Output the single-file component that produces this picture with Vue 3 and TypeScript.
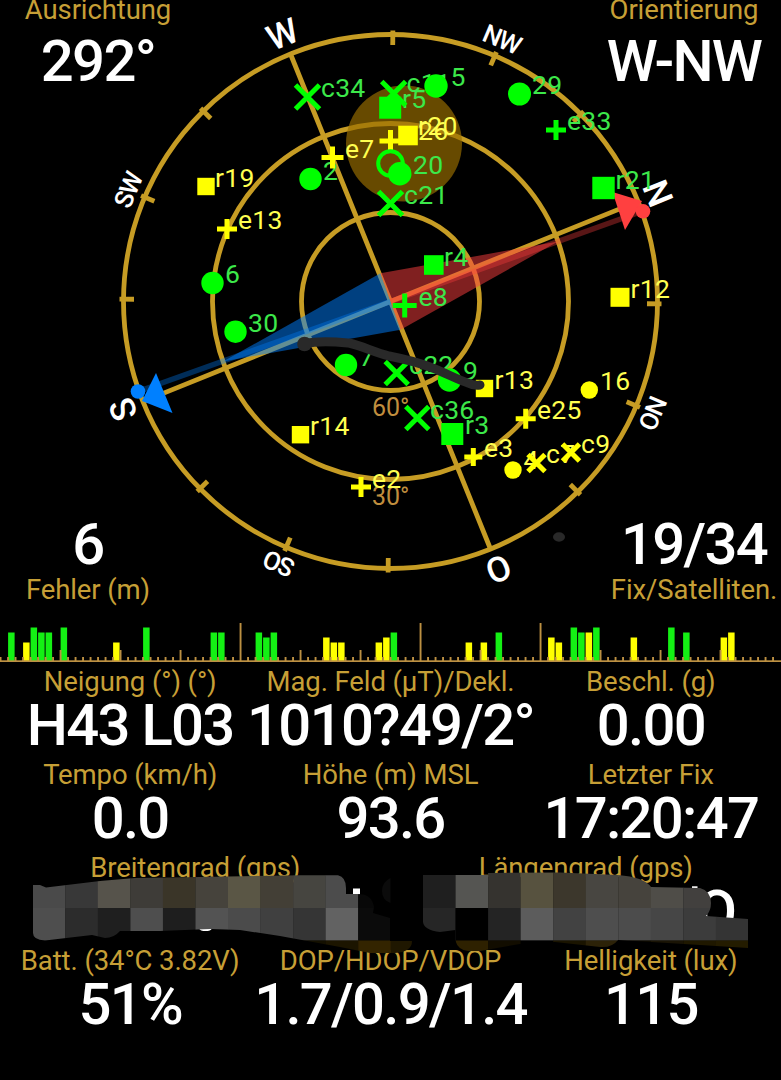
<script setup lang="ts">
type Shape = 'dot' | 'ring' | 'square' | 'plus' | 'cross'
interface Sat {
  shape: Shape
  x: number
  y: number
  r: number
  c: 'g' | 'y'
  label?: string
  lx?: number
  ly?: number
}

const CX = 390.5
const CY = 301.5
const HEADING = 68

const points = [
  { t: 'N', a: HEADING, big: true },
  { t: 'NO', a: HEADING + 45, big: false },
  { t: 'O', a: HEADING + 90, big: true },
  { t: 'SO', a: HEADING + 135, big: false },
  { t: 'S', a: HEADING + 180, big: true },
  { t: 'SW', a: HEADING + 225, big: false },
  { t: 'W', a: HEADING + 270, big: true },
  { t: 'NW', a: HEADING + 315, big: false },
]
const ticks = Array.from({ length: 16 }, (_, i) => i)
  .filter((i) => i % 4 !== 0)
  .map((i) => HEADING + i * 22.5)

const sats: Sat[] = [
  { shape: 'cross', x: 307.5, y: 97, r: 12, c: 'g', label: 'c34', lx: 321, ly: 97 },
  { shape: 'cross', x: 393.7, y: 93.5, r: 12, c: 'g', label: 'c11', lx: 406.5, ly: 91.5 },
  { shape: 'dot', x: 436, y: 86, r: 11.7, c: 'g', label: '5', lx: 450.5, ly: 86 },
  { shape: 'square', x: 390.2, y: 107.7, r: 11, c: 'g', label: 'r5', lx: 402, ly: 107.5 },
  { shape: 'dot', x: 519.5, y: 94, r: 11.5, c: 'g', label: '29', lx: 532, ly: 94 },
  { shape: 'plus', x: 556, y: 130, r: 10, c: 'g', label: 'e33', lx: 567, ly: 130 },
  { shape: 'square', x: 603.5, y: 188, r: 11.2, c: 'g', label: 'r21', lx: 615.5, ly: 188.5 },
  { shape: 'plus', x: 390.5, y: 141, r: 11, c: 'y', label: '26', lx: 418, ly: 139.5 },
  { shape: 'square', x: 408, y: 135.5, r: 9.8, c: 'y', label: 'r20', lx: 418, ly: 134.5 },
  { shape: 'dot', x: 310.5, y: 179, r: 11.2, c: 'g', label: '2', lx: 323, ly: 179.5 },
  { shape: 'plus', x: 332.5, y: 157.5, r: 11, c: 'y', label: 'e7', lx: 345, ly: 158 },
  { shape: 'ring', x: 390.5, y: 163.5, r: 12.3, c: 'g' },
  { shape: 'dot', x: 399.8, y: 173.7, r: 11.7, c: 'g', label: '20', lx: 413, ly: 173.5 },
  { shape: 'cross', x: 390.5, y: 203.5, r: 12, c: 'g', label: 'c21', lx: 404, ly: 203.5 },
  { shape: 'square', x: 206, y: 186.5, r: 8.7, c: 'y', label: 'r19', lx: 215, ly: 187 },
  { shape: 'plus', x: 227, y: 229, r: 10, c: 'y', label: 'e13', lx: 238, ly: 229 },
  { shape: 'dot', x: 212.5, y: 283, r: 11.2, c: 'g', label: '6', lx: 225, ly: 282.5 },
  { shape: 'dot', x: 235.5, y: 331.7, r: 11.2, c: 'g', label: '30', lx: 248, ly: 332 },
  { shape: 'square', x: 433.8, y: 265, r: 9.8, c: 'g', label: 'r4', lx: 444, ly: 265.5 },
  { shape: 'plus', x: 404.7, y: 305.5, r: 12, c: 'g', label: 'e8', lx: 418.5, ly: 306 },
  { shape: 'dot', x: 346, y: 365, r: 11.2, c: 'g', label: '7', lx: 359, ly: 366 },
  { shape: 'cross', x: 396.7, y: 373, r: 11.5, c: 'g', label: 'c22', lx: 409, ly: 373.5 },
  { shape: 'dot', x: 449.5, y: 380, r: 11.7, c: 'g', label: '9', lx: 463, ly: 380 },
  { shape: 'square', x: 484.5, y: 388.5, r: 8.7, c: 'y', label: 'r13', lx: 494.5, ly: 389 },
  { shape: 'square', x: 620, y: 297.3, r: 9.5, c: 'y', label: 'r12', lx: 630.5, ly: 298 },
  { shape: 'dot', x: 589.3, y: 390, r: 8.7, c: 'y', label: '16', lx: 600, ly: 390 },
  { shape: 'cross', x: 417.3, y: 418, r: 11.5, c: 'g', label: 'c36', lx: 430, ly: 419 },
  { shape: 'square', x: 452.3, y: 434, r: 11, c: 'g', label: 'r3', lx: 465, ly: 434 },
  { shape: 'plus', x: 525.7, y: 418.7, r: 10, c: 'y', label: 'e25', lx: 537, ly: 419 },
  { shape: 'plus', x: 473.3, y: 457, r: 9, c: 'y', label: 'e3', lx: 484, ly: 457 },
  { shape: 'dot', x: 513, y: 470, r: 8.7, c: 'y', label: '4', lx: 523.5, ly: 469 },
  { shape: 'cross', x: 536.5, y: 463, r: 8.5, c: 'y', label: 'c7', lx: 546, ly: 462.5 },
  { shape: 'cross', x: 571, y: 452.5, r: 8.5, c: 'y', label: 'c9', lx: 581, ly: 452.5 },
  { shape: 'plus', x: 361, y: 487, r: 10, c: 'y', label: 'e2', lx: 372, ly: 487.5 },
  { shape: 'square', x: 300.5, y: 434.7, r: 8.7, c: 'y', label: 'r14', lx: 310, ly: 435 },
]

function glyph(s: Sat): string {
  const { x, y, r } = s
  if (s.shape === 'plus') return `M${x - r} ${y}H${x + r}M${x} ${y - r}V${y + r}`
  return `M${x - r} ${y - r}L${x + r} ${y + r}M${x + r} ${y - r}L${x - r} ${y + r}`
}

/* signal strength histogram: slot number, bar height, colour */
const bars: [number, number, 'g' | 'y'][] = [
  [1, 29, 'g'], [3, 19, 'y'], [4, 34, 'g'], [5, 29, 'g'], [6, 29, 'g'], [8, 34, 'g'],
  [15, 19, 'y'], [19, 34, 'g'], [28, 29, 'g'], [29, 29, 'g'], [34, 29, 'g'], [35, 24, 'g'],
  [36, 29, 'g'], [43, 24, 'y'], [44, 19, 'y'], [45, 19, 'y'], [50, 19, 'y'], [51, 24, 'y'],
  [52, 29, 'g'], [62, 19, 'y'], [64, 19, 'y'], [66, 29, 'g'], [73, 24, 'y'], [74, 19, 'y'],
  [76, 34, 'g'], [77, 29, 'g'], [78, 29, 'y'], [79, 34, 'g'], [84, 24, 'y'], [89, 34, 'g'],
  [91, 29, 'g'], [96, 24, 'y'], [97, 29, 'y'],
]
const scale = Array.from({ length: 104 }, (_, i) => ({
  x: i * 7.5 + 0.4,
  h: [32, 56, 72].includes(i) ? 39 : i % 8 === 0 && i > 0 ? 12 : 5,
}))

const rows = [
  [
    { l: 'Neigung (°) (°)', v: 'H43 L03', k: 'neig' },
    { l: 'Mag. Feld (µT)/Dekl.', v: '1010?49/2°', k: 'mag' },
    { l: 'Beschl. (g)', v: '0.00', k: 'acc' },
  ],
  [
    { l: 'Tempo (km/h)', v: '0.0', k: 'speed' },
    { l: 'Höhe (m) MSL', v: '93.6', k: 'alt' },
    { l: 'Letzter Fix', v: '17:20:47', k: 'fix' },
  ],
  [
    { l: 'Breitengrad (gps)', v: '', k: 'lat' },
    { l: 'Längengrad (gps)', v: 'O', k: 'lon' },
  ],
  [
    { l: 'Batt. (34°C 3.82V)', v: '51%', k: 'batt' },
    { l: 'DOP/HDOP/VDOP', v: '1.7/0.9/1.4', k: 'dop' },
    { l: 'Helligkeit (lux)', v: '115', k: 'lux' },
  ],
]

const leftCells = [
  ['#4a4a4a', '#383838', '#56534b', '#3e3c38', '#3a3528', '#46433c', '#5a5645', '#433f36', '#464540', '#4c4c4c', '#080808', '#000'],
  ['#4e4e4e', '#2c2c2c', '#1f1f1f', '#4e4e4e', '#1e1e1e', '#535353', '#4b4b4b', '#404040', '#353535', '#626262', '#0b0b0b', '#000'],
  ['#333', '#222', '#111', '#000', '#000', '#000', '#000', '#0a0800', '#141000', '#1c1500', '#332400', '#1f1700'],
]
const rightCells = [
  ['#1f1f1f', '#555552', '#35332f', '#57523f', '#3c372c', '#484641', '#46433d', '#4f4d48', '#42403e', '#3a3a3a'],
  ['#262626', '#000', '#242424', '#5c5c5c', '#424242', '#4e4e4e', '#4c4c4c', '#464646', '#3c3c3c', '#343434'],
  ['#000', '#2e2100', '#120d00', '#000', '#1a1400', '#2c2208', '#100c00', '#1a1405', '#1f1800', '#241c00'],
]
const CELL = 32.55
const rowTop = [870, 908, 940.5]
const rowH = [38.2, 32.7, 20]
</script>

<template>
  <main class="screen">
    <section class="sky">
      <svg class="dial" width="781" height="612" viewBox="0 0 781 612">
        <g class="gold">
          <circle :cx="CX" :cy="CY" r="267" />
          <circle :cx="CX" :cy="CY" r="178" />
          <circle :cx="CX" :cy="CY" r="89" />
          <g :transform="`translate(${CX} ${CY})`">
            <path d="M0 -268V268M-268 0H268" :transform="`rotate(${HEADING})`" />
            <path v-for="a in ticks" :key="a" d="M0 -271V-256.5" :transform="`rotate(${a})`" />
          </g>
        </g>
        <g :transform="`translate(${CX} ${CY})`">
          <text
            v-for="p in points"
            :key="p.t"
            y="-276"
            text-anchor="middle"
            :class="['point', { big: p.big }]"
            :transform="`rotate(${p.a})`"
          >{{ p.t }}</text>
        </g>
        <circle class="sun" cx="404" cy="143.5" r="58" />
        <g class="elev">
          <text x="372" y="416">60°</text>
          <text x="372" y="505">30°</text>
        </g>

        <path class="blue half" d="M380.4 273.3L223 361.5L400.6 329.7Z" />
        <path class="red half" d="M380.4 273.3L558 241.5L400.6 329.7Z" />
        <path class="blueLine" d="M390.5 301.5L138 391.5" />
        <path class="redLine" d="M390.5 301.5L643 211" />
        <path class="red" d="M612.5 192L642 201L625 230Z" />
        <path class="blue" d="M156 373L142 401L172.5 413Z" />
        <circle class="red" cx="643" cy="211.3" r="7.3" />
        <circle class="blue" cx="138" cy="391.5" r="7.3" />

        <g v-for="(s, i) in sats" :key="'t' + i" :class="['label', s.c]">
          <text v-if="s.label" :x="s.lx" :y="s.ly">{{ s.label }}</text>
        </g>
        <g v-for="(s, i) in sats" :key="'m' + i" :class="['mark', s.c]">
          <circle v-if="s.shape === 'dot'" :cx="s.x" :cy="s.y" :r="s.r" />
          <circle v-else-if="s.shape === 'ring'" class="open" :cx="s.x" :cy="s.y" :r="s.r" />
          <rect v-else-if="s.shape === 'square'" :x="s.x - s.r" :y="s.y - s.r" :width="s.r * 2" :height="s.r * 2" />
          <path v-else :d="glyph(s)" />
        </g>

        <path
          class="scribble"
          d="M305 344C318 340 338 342 349 343C362 346 374 352 389 356C404 359 414 361 430 367C446 373 458 380 468 383Q474 386 480 385"
        />
        <circle class="ink" cx="304.5" cy="344" r="7.3" />
        <ellipse class="ink" cx="559" cy="537" rx="6" ry="4.7" />
      </svg>

      <div class="corner tl"><span class="name">Ausrichtung</span><b class="val">292°</b></div>
      <div class="corner tr"><span class="name">Orientierung</span><b class="val">W-NW</b></div>
      <div class="corner bl"><b class="val">6</b><span class="name">Fehler (m)</span></div>
      <div class="corner br"><b class="val">19/34</b><span class="name">Fix/Satelliten.</span></div>
    </section>

    <svg class="strip" width="781" height="54" viewBox="0 612 781 54">
      <rect
        v-for="b in bars"
        :key="b[0]"
        :class="'bar-' + b[2]"
        :x="b[0] * 7.5 + 0.6"
        :y="661.5 - b[1]"
        width="6.5"
        :height="b[1]"
      />
      <rect v-for="t in scale" :key="t.x" class="tick" :x="t.x - 0.8" :y="662 - t.h" width="1.9" :height="t.h" />
      <rect class="tick" x="0" y="660.3" width="781" height="1.7" />
    </svg>

    <section class="grid">
      <div v-for="(r, i) in rows" :key="i" class="row">
        <div v-for="c in r" :key="c.k" :class="['cell', c.k]">
          <span class="name">{{ c.l }}</span>
          <b class="val">{{ c.v }}</b>
        </div>
      </div>
    </section>

    <svg class="smear" width="781" height="90" viewBox="0 868 781 90">
      <defs>
        <clipPath id="clipLeft">
          <path
            d="M33 885H40L46 887.5L100 881L135 878L200 877L300 875.2H338Q346 877 346 888V894H358Q372 894 374 907L373 913L390 918V941H412Q412 952 395 953H370L340 947L280 936L240 930L210 929L160 931H120Q114 938 105 938L92 935L45 940.5Q33 940 33 933Z"
          />
        </clipPath>
        <clipPath id="clipRight">
          <path
            d="M423 875H488V873L560 872.5L618 875Q644 877 651 887L700 888Q711 891 711 903Q711 911 706 916L748 919V948L700 945L618 940Q612 948 600 947L555 942L520 944L480 951H468Q458 950 455.5 941V930L440 932Q424 930 423 922Z"
          />
        </clipPath>
      </defs>
      <rect class="white" x="353" y="888.5" width="7" height="6" />
      <rect class="white" x="692" y="886.3" width="5.5" height="4" />
      <ellipse class="white" cx="205.5" cy="929" rx="6" ry="2" />
      <path class="faint" d="M390.5 878Q382 882 382 891Q382 900 390.5 903Z" />
      <g clip-path="url(#clipLeft)">
        <g v-for="(line, j) in leftCells" :key="j">
          <rect v-for="(c, i) in line" :key="i" :x="32.7 + i * CELL" :y="rowTop[j]" :width="CELL + 0.2" :height="rowH[j]" :fill="c" />
        </g>
      </g>
      <g clip-path="url(#clipRight)">
        <g v-for="(line, j) in rightCells" :key="j">
          <rect v-for="(c, i) in line" :key="i" :x="423 + i * CELL" :y="rowTop[j]" :width="CELL + 0.2" :height="rowH[j]" :fill="c" />
        </g>
      </g>
    </svg>
  </main>
</template>

<style>
body {
  background: #000;
}
</style>

<style scoped>
.screen {
  position: relative;
  width: 781px;
  height: 1080px;
  overflow: hidden;
  background: #000;
  font-family: Roboto, 'Liberation Sans', sans-serif;
}
.sky {
  position: relative;
  height: 612px;
}
.dial,
.strip {
  display: block;
}
.gold {
  fill: none;
  stroke: #c69c24;
  stroke-width: 4.8;
}
.point {
  fill: #fff;
  font-size: 25.5px;
  font-weight: 500;
  letter-spacing: -1.2px;
}
.point.big {
  font-size: 35px;
  letter-spacing: 0;
}
.sun {
  fill: #996f00;
  fill-opacity: 0.67;
}
.elev text {
  font-size: 25px;
  fill: #c08e3e;
}
.red {
  fill: #ff4040;
}
.blue {
  fill: #0080ff;
}
.half {
  fill-opacity: 0.5;
}
.blueLine,
.redLine {
  stroke-width: 5.5;
  stroke-opacity: 0.35;
}
.blueLine {
  stroke: #0080ff;
}
.redLine {
  stroke: #ff4040;
}
.label {
  font-size: 26.5px;
  letter-spacing: 0.3px;
}
.label.g {
  fill: #3ce84a;
}
.label.y {
  fill: #ffff50;
}
.mark {
  stroke-width: 5;
}
.mark path {
  fill: none;
}
.mark.g {
  fill: #0f0;
}
.mark.y {
  fill: #ff0;
}
.mark.g path,
.mark.g .open {
  stroke: #0f0;
}
.mark.y path {
  stroke: #ff0;
}
.mark .open {
  fill: none;
  stroke-width: 4;
}
.scribble {
  fill: none;
  stroke: #292929;
  stroke-width: 9;
  stroke-linecap: round;
}
.ink {
  fill: #292929;
}
.name {
  display: block;
  font-size: 27.5px;
  line-height: 32px;
  letter-spacing: -0.1px;
  color: #c69f36;
  white-space: nowrap;
}
.val {
  display: block;
  margin-top: -3px;
  height: 61px;
  font-size: 58px;
  line-height: 61px;
  font-weight: 500;
  letter-spacing: -1.7px;
  color: #fff;
  white-space: nowrap;
}
.corner {
  position: absolute;
  display: flex;
  flex-direction: column;
  align-items: center;
  width: 180px;
}
.tl {
  left: 8px;
  top: -6px;
}
.tr {
  left: 594px;
  top: -6px;
}
.tl .val,
.tr .val {
  margin-top: 5px;
}
.bl {
  left: -2px;
  top: 517px;
}
.br {
  left: 604px;
  top: 517px;
}
.bl .name,
.br .name {
  margin-top: -1.5px;
}
.bar-g {
  fill: #14f014;
}
.bar-y {
  fill: #ff0;
}
.tick {
  fill: #bc9042;
}
.grid {
  display: flex;
  flex-direction: column;
}
.row {
  display: flex;
  height: 93px;
}
.cell {
  flex: 1 1 0;
  min-width: 0;
  display: flex;
  flex-direction: column;
  align-items: center;
}
.lon .val {
  padding-left: 261px;
}
.smear {
  position: absolute;
  left: 0;
  top: 868px;
}
.white {
  fill: #fff;
}
.faint {
  fill: #0b0b0b;
}
</style>
